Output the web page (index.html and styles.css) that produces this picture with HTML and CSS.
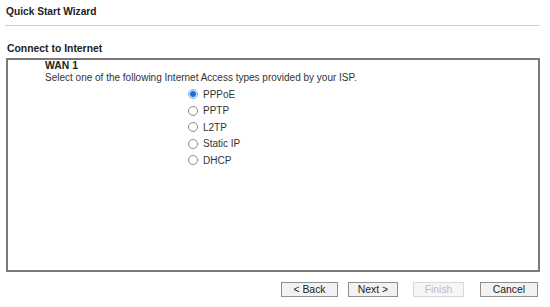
FILE: index.html
```html
<!DOCTYPE html>
<html>
<head>
<meta charset="utf-8">
<link rel="stylesheet" href="styles.css">
</head>
<body>
<div class="page">
  <div class="title">Quick Start Wizard</div>
  <div class="section-title">Connect to Internet</div>
  <div class="box">
    <div class="wan">WAN 1</div>
    <div class="desc">Select one of the following Internet Access types provided by your ISP.</div>
    <div class="options">
      <div class="opt"><span class="radio checked"></span><span>PPPoE</span></div>
      <div class="opt"><span class="radio"></span><span>PPTP</span></div>
      <div class="opt"><span class="radio"></span><span>L2TP</span></div>
      <div class="opt"><span class="radio"></span><span>Static IP</span></div>
      <div class="opt"><span class="radio"></span><span>DHCP</span></div>
    </div>
  </div>
  <div class="buttons">
    <button class="btn btn-back">&lt; Back</button>
    <button class="btn btn-next">Next &gt;</button>
    <button class="btn btn-finish" disabled>Finish</button>
    <button class="btn btn-cancel">Cancel</button>
  </div>
</div>
</body>
</html>
```
FILE: styles.css
```css
html, body {
  margin: 0;
  padding: 0;
  background: #fff;
}
body {
  font-family: "Liberation Sans", Arial, sans-serif;
  color: #222;
  width: 550px;
  height: 307px;
  overflow: hidden;
}
.page {
  padding: 0 10px 0 6px;
}
.title {
  font-weight: bold;
  font-size: 10.2px;
  line-height: 12px;
  padding: 6px 0 0 1px;
  height: 19px;
  margin-left: -1px;
  border-bottom: 1px solid #cfcfcf;
  color: #222;
}
.section-title {
  font-weight: bold;
  font-size: 10.4px;
  line-height: 12px;
  margin-top: 17px;
  padding-left: 1px;
  height: 12px;
  color: #222;
}
.box {
  margin-top: 3px;
  border: 2px solid #7a7a7a;
  padding: 0 0 0 37px;
  box-sizing: border-box;
  height: 214px;
}
.wan {
  font-weight: bold;
  font-size: 10.4px;
  line-height: 12px;
  color: #222;
}
.desc {
  font-size: 10px;
  line-height: 12px;
  color: #333;
}
.options {
  margin-left: 143px;
  margin-top: 2px;
}
.opt {
  display: flex;
  align-items: center;
  height: 16.5px;
  font-size: 10px;
  gap: 5px;
  color: #333;
}
.radio {
  width: 10px;
  height: 10px;
  border: 1px solid #8a8a8a;
  border-radius: 50%;
  box-sizing: border-box;
  background: #fff;
}
.radio.checked {
  border: 1px solid #7fb0ea;
  background: radial-gradient(circle, #1c6fd8 0 2.6px, #cfe1f7 3.2px);
}
.buttons {
  display: flex;
  justify-content: flex-end;
  margin-top: 10px;
  padding-right: 2px;
}
.btn {
  font-family: "Liberation Sans", Arial, sans-serif;
  font-size: 10.4px;
  height: 15px;
  padding: 0;
  border: 1px solid #8f8f8f;
  background: #f2f2f2;
  color: #222;
  box-sizing: border-box;
  line-height: 13px;
}
.btn-back { width: 57px; }
.btn-next { width: 50px; margin-left: 10px; }
.btn-finish { width: 51px; margin-left: 15px; color: #bdbdbd; border-color: #d8d8d8; background: #f6f6f6; }
.btn-cancel { width: 58px; margin-left: 16px; }
```
